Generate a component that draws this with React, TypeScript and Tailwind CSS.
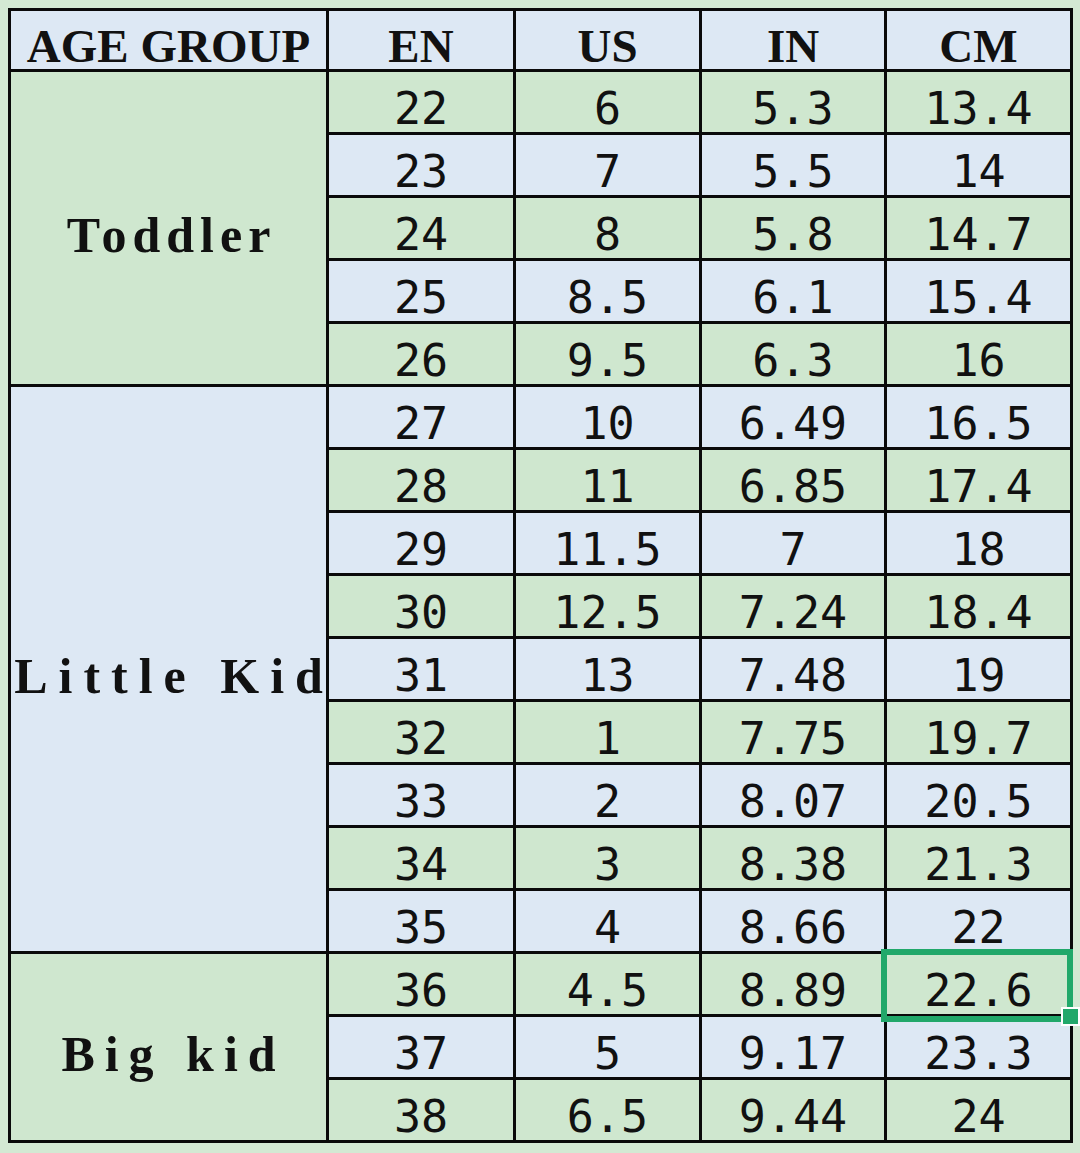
import React from "react";

type Row = { en: string; us: string; inch: string; cm: string };

const rows: Row[] = [
  { en: "22", us: "6", inch: "5.3", cm: "13.4" },
  { en: "23", us: "7", inch: "5.5", cm: "14" },
  { en: "24", us: "8", inch: "5.8", cm: "14.7" },
  { en: "25", us: "8.5", inch: "6.1", cm: "15.4" },
  { en: "26", us: "9.5", inch: "6.3", cm: "16" },
  { en: "27", us: "10", inch: "6.49", cm: "16.5" },
  { en: "28", us: "11", inch: "6.85", cm: "17.4" },
  { en: "29", us: "11.5", inch: "7", cm: "18" },
  { en: "30", us: "12.5", inch: "7.24", cm: "18.4" },
  { en: "31", us: "13", inch: "7.48", cm: "19" },
  { en: "32", us: "1", inch: "7.75", cm: "19.7" },
  { en: "33", us: "2", inch: "8.07", cm: "20.5" },
  { en: "34", us: "3", inch: "8.38", cm: "21.3" },
  { en: "35", us: "4", inch: "8.66", cm: "22" },
  { en: "36", us: "4.5", inch: "8.89", cm: "22.6" },
  { en: "37", us: "5", inch: "9.17", cm: "23.3" },
  { en: "38", us: "6.5", inch: "9.44", cm: "24" },
];

const GREEN = "bg-[#cfe7cf]";
const BLUE = "bg-[#dde8f4]";

const boldFont = "font-['Liberation_Serif',serif] font-bold leading-none";
const numFont = "font-['DejaVu_Sans_Mono',monospace] text-[45px] leading-none";

const colStart = ["col-start-2", "col-start-3", "col-start-4", "col-start-5"];

type Group = { label: string; rows: string; start: string; bg: string; track: string };

const groups: Group[] = [
  { label: "Toddler", rows: "row-span-5", start: "row-start-2", bg: GREEN, track: "tracking-[6px] pl-[6px]" },
  { label: "Little Kid", rows: "row-span-9", start: "row-start-7", bg: BLUE, track: "tracking-[11px] pl-[11px]" },
  { label: "Big kid", rows: "row-span-3", start: "row-start-16", bg: GREEN, track: "tracking-[10px] pl-[10px]" },
];

const GroupCell: React.FC<{ g: Group }> = ({ g }) => (
  <div
    className={`${g.bg} ${g.rows} ${g.start} col-start-1 ${boldFont} ${g.track} flex items-center justify-center pt-[14px] text-[50px] whitespace-nowrap`}
  >
    {g.label}
  </div>
);

const SizeChart: React.FC = () => {
  const headers = ["EN", "US", "IN", "CM"];

  return (
    <div className="grid w-[1065px] grid-cols-[315px_184px_183px_182px_183px] grid-rows-[58px_repeat(17,60px)] gap-[3px] bg-[#0a0a0a] p-[3px] text-[#111]">
      <div className={`${BLUE} ${boldFont} flex items-center justify-center pt-[12px] text-[47px] whitespace-nowrap`}>
        AGE GROUP
      </div>
      {headers.map((h) => (
        <div key={h} className={`${BLUE} ${boldFont} flex items-center justify-center pt-[12px] text-[47px]`}>
          {h}
        </div>
      ))}

      {groups.map((g) => (
        <GroupCell key={g.label} g={g} />
      ))}

      {rows.map((r, i) => {
        const bg = i % 2 === 0 ? GREEN : BLUE;
        const cells = [r.en, r.us, r.inch, r.cm];
        return cells.map((c, j) => (
          <div
            key={`${r.en}-${j}`}
            style={{ gridRow: i + 2 }}
            className={`${bg} ${numFont} ${colStart[j]} relative flex items-center justify-center pt-[12px]`}
          >
            {c}
            {i === 14 && j === 3 && (
              <>
                <div className="absolute -top-[5px] -left-[6px] -right-[3px] -bottom-[8px] z-10 border-[6px] border-[#21a86a]" />
                <div className="absolute -right-[10px] -bottom-[12px] z-20 h-[19px] w-[19px] border-2 border-white bg-[#21a86a]" />
              </>
            )}
          </div>
        ));
      })}
    </div>
  );
};

export default function App() {
  return (
    <div className="h-[1153px] w-[1080px] overflow-hidden bg-[#d3e9d3] pl-[8px] pt-[8px]">
      <SizeChart />
    </div>
  );
}
